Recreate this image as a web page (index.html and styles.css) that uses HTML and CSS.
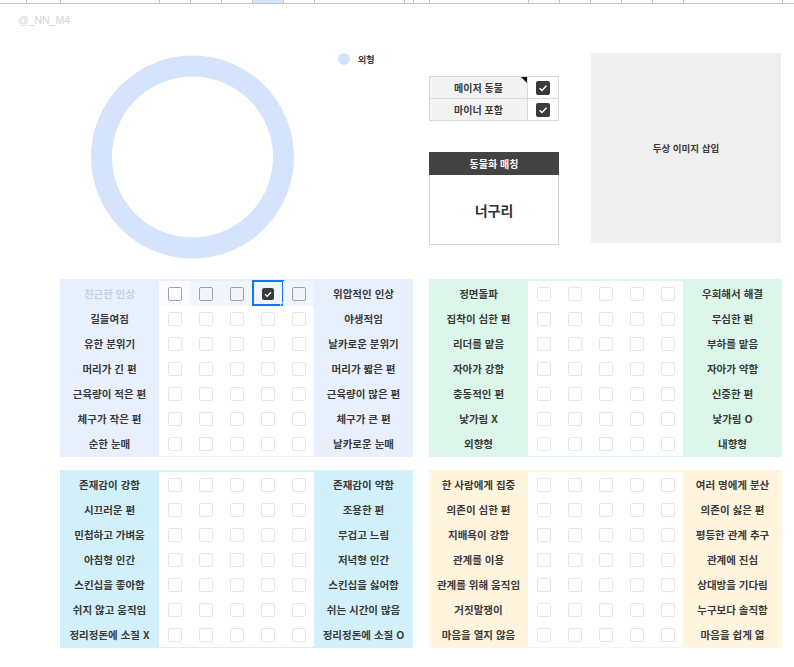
FILE: index.html
```html
<!DOCTYPE html>
<html lang="ko">
<head>
<meta charset="utf-8">
<title>동물화 매칭</title>
<link rel="stylesheet" href="styles.css">
</head>
<body>
<div class="strip">
  <span style="width:27px"></span><span style="width:34px"></span><span style="width:99px"></span><span style="width:31px"></span><span style="width:31px"></span><span style="width:31px"></span><span class="sel-col" style="width:31px"></span><span style="width:31px"></span><span style="width:90px"></span><span style="width:9px"></span><span style="width:16px"></span><span style="width:99px"></span><span style="width:31px"></span><span style="width:31px"></span><span style="width:31px"></span><span style="width:31px"></span><span style="width:31px"></span><span style="width:99px"></span>
</div>

<div class="top">
  <div class="watermark">@_NN_M4</div>
  <div class="top-row">
    <div class="chart">
      <svg width="369" height="222" viewBox="0 0 369 222">
        <circle cx="132.5" cy="104" r="91" fill="none" stroke="#d5e3fd" stroke-width="21"/>
        <circle cx="284" cy="6" r="6" fill="#d5e3fd"/>
        <text x="298" y="9.5" class="legend-text">외형</text>
      </svg>
    </div>
    <div class="side">
      <div class="mini">
        <div class="mini-row">
          <div class="mini-label note">메이저 동물</div>
          <div class="mini-box"><svg class="chk14" viewBox="0 0 14 14"><rect width="14" height="14" rx="2" fill="#3a3a3a"/><polyline points="3.6,7.2 6,9.5 10.5,4.7" fill="none" stroke="#fff" stroke-width="1.5"/></svg></div>
        </div>
        <div class="mini-row">
          <div class="mini-label">마이너 포함</div>
          <div class="mini-box"><svg class="chk14" viewBox="0 0 14 14"><rect width="14" height="14" rx="2" fill="#3a3a3a"/><polyline points="3.6,7.2 6,9.5 10.5,4.7" fill="none" stroke="#fff" stroke-width="1.5"/></svg></div>
        </div>
      </div>
      <div class="match">
        <div class="match-head">동물화 매칭</div>
        <div class="match-body">너구리</div>
      </div>
    </div>
    <div class="image-box">두상 이미지 삽입</div>
  </div>
</div>

<div class="tables">
  <div class="pair">
    <div class="panel blue">
      <div class="lab faded">친근한 인상</div><span class="cb r1 plain"></span><span class="cb r1"></span><span class="cb r1"></span><span class="cb r1 on"><svg class="chk12" viewBox="0 0 12 12"><rect width="12" height="12" rx="2" fill="#3a3a3a"/><polyline points="3,6.2 5.2,8.2 9,4.2" fill="none" stroke="#fff" stroke-width="1.4"/></svg><span class="selbox"></span><span class="handle"></span></span><span class="cb r1"></span><div class="lab">위압적인 인상</div>
      <div class="lab">길들여짐</div><span class="cb"></span><span class="cb"></span><span class="cb"></span><span class="cb"></span><span class="cb"></span><div class="lab">야생적임</div>
      <div class="lab">유한 분위기</div><span class="cb"></span><span class="cb"></span><span class="cb"></span><span class="cb"></span><span class="cb"></span><div class="lab">날카로운 분위기</div>
      <div class="lab">머리가 긴 편</div><span class="cb"></span><span class="cb"></span><span class="cb"></span><span class="cb"></span><span class="cb"></span><div class="lab">머리가 짧은 편</div>
      <div class="lab">근육량이 적은 편</div><span class="cb"></span><span class="cb"></span><span class="cb"></span><span class="cb"></span><span class="cb"></span><div class="lab">근육량이 많은 편</div>
      <div class="lab">체구가 작은 편</div><span class="cb"></span><span class="cb"></span><span class="cb"></span><span class="cb"></span><span class="cb"></span><div class="lab">체구가 큰 편</div>
      <div class="lab">순한 눈매</div><span class="cb"></span><span class="cb"></span><span class="cb"></span><span class="cb"></span><span class="cb"></span><div class="lab">날카로운 눈매</div>
    </div>
    <div class="panel mint">
      <div class="lab">정면돌파</div><span class="cb"></span><span class="cb"></span><span class="cb"></span><span class="cb"></span><span class="cb"></span><div class="lab">우회해서 해결</div>
      <div class="lab">집착이 심한 편</div><span class="cb"></span><span class="cb"></span><span class="cb"></span><span class="cb"></span><span class="cb"></span><div class="lab">무심한 편</div>
      <div class="lab">리더를 맡음</div><span class="cb"></span><span class="cb"></span><span class="cb"></span><span class="cb"></span><span class="cb"></span><div class="lab">부하를 맡음</div>
      <div class="lab">자아가 강함</div><span class="cb"></span><span class="cb"></span><span class="cb"></span><span class="cb"></span><span class="cb"></span><div class="lab">자아가 약함</div>
      <div class="lab">충동적인 편</div><span class="cb"></span><span class="cb"></span><span class="cb"></span><span class="cb"></span><span class="cb"></span><div class="lab">신중한 편</div>
      <div class="lab">낯가림 X</div><span class="cb"></span><span class="cb"></span><span class="cb"></span><span class="cb"></span><span class="cb"></span><div class="lab">낯가림 O</div>
      <div class="lab">외향형</div><span class="cb"></span><span class="cb"></span><span class="cb"></span><span class="cb"></span><span class="cb"></span><div class="lab">내향형</div>
    </div>
  </div>
  <div class="pair">
    <div class="panel cyan">
      <div class="lab">존재감이 강함</div><span class="cb"></span><span class="cb"></span><span class="cb"></span><span class="cb"></span><span class="cb"></span><div class="lab">존재감이 약함</div>
      <div class="lab">시끄러운 편</div><span class="cb"></span><span class="cb"></span><span class="cb"></span><span class="cb"></span><span class="cb"></span><div class="lab">조용한 편</div>
      <div class="lab">민첩하고 가벼움</div><span class="cb"></span><span class="cb"></span><span class="cb"></span><span class="cb"></span><span class="cb"></span><div class="lab">무겁고 느림</div>
      <div class="lab">아침형 인간</div><span class="cb"></span><span class="cb"></span><span class="cb"></span><span class="cb"></span><span class="cb"></span><div class="lab">저녁형 인간</div>
      <div class="lab">스킨십을 좋아함</div><span class="cb"></span><span class="cb"></span><span class="cb"></span><span class="cb"></span><span class="cb"></span><div class="lab">스킨십을 싫어함</div>
      <div class="lab">쉬지 않고 움직임</div><span class="cb"></span><span class="cb"></span><span class="cb"></span><span class="cb"></span><span class="cb"></span><div class="lab">쉬는 시간이 많음</div>
      <div class="lab">정리정돈에 소질 X</div><span class="cb"></span><span class="cb"></span><span class="cb"></span><span class="cb"></span><span class="cb"></span><div class="lab">정리정돈에 소질 O</div>
    </div>
    <div class="panel cream">
      <div class="lab">한 사람에게 집중</div><span class="cb"></span><span class="cb"></span><span class="cb"></span><span class="cb"></span><span class="cb"></span><div class="lab">여러 명에게 분산</div>
      <div class="lab">의존이 심한 편</div><span class="cb"></span><span class="cb"></span><span class="cb"></span><span class="cb"></span><span class="cb"></span><div class="lab">의존이 싫은 편</div>
      <div class="lab">지배욕이 강함</div><span class="cb"></span><span class="cb"></span><span class="cb"></span><span class="cb"></span><span class="cb"></span><div class="lab">평등한 관계 추구</div>
      <div class="lab">관계를 이용</div><span class="cb"></span><span class="cb"></span><span class="cb"></span><span class="cb"></span><span class="cb"></span><div class="lab">관계에 진심</div>
      <div class="lab">관계를 위해 움직임</div><span class="cb"></span><span class="cb"></span><span class="cb"></span><span class="cb"></span><span class="cb"></span><div class="lab">상대방을 기다림</div>
      <div class="lab">거짓말쟁이</div><span class="cb"></span><span class="cb"></span><span class="cb"></span><span class="cb"></span><span class="cb"></span><div class="lab">누구보다 솔직함</div>
      <div class="lab">마음을 열지 않음</div><span class="cb"></span><span class="cb"></span><span class="cb"></span><span class="cb"></span><span class="cb"></span><div class="lab">마음을 쉽게 엶</div>
    </div>
  </div>
</div>
</body>
</html>
```

FILE: styles.css
```css
* { box-sizing: border-box; }
html, body { margin: 0; padding: 0; background: #fff; }
body {
  width: 794px;
  height: 667px;
  overflow: hidden;
  font-family: "Noto Sans CJK KR", "Noto Sans", sans-serif;
  color: #3a3a3a;
}

/* sheet column header remnant */
.strip {
  display: flex;
  height: 4px;
  border-bottom: 1px solid #c4c4c4;
}
.strip span {
  display: block;
  height: 3px;
  border-right: 1px solid #c4c4c4;
  flex: none;
}
.strip .sel-col { background: #d3e3fd; }

.top { height: 275px; }
.watermark {
  height: 25px;
  padding: 8px 0 0 18px;
  font: 10.5px/16px "Liberation Sans", Arial, sans-serif;
  color: #d2d2d2;
}
.top-row {
  display: flex;
  align-items: flex-start;
  margin-top: 24px;
  padding-left: 60px;
}
.chart { width: 369px; height: 222px; flex: none; }
.chart svg { display: block; }
.legend-text {
  font-family: "Noto Sans CJK KR", sans-serif;
  font-size: 9px;
  font-weight: 700;
  fill: #3a3a3a;
}

.side { width: 130px; flex: none; margin-top: 23px; }
.mini { border: 1px solid #d9d9d9; }
.mini-row { display: flex; height: 22px; }
.mini-row + .mini-row { border-top: 1px solid #d9d9d9; height: 22px; }
.mini-row:first-child { height: 21px; }
.mini-label {
  width: 98px;
  background: #f3f3f3;
  border-right: 1px solid #d9d9d9;
  display: flex;
  align-items: center;
  justify-content: center;
  font-size: 10px;
  font-weight: 700;
  color: #3a3a3a;
  position: relative;
}
.mini-label.note::after {
  content: "";
  position: absolute;
  top: 0;
  right: 0;
  border-top: 6px solid #111;
  border-left: 6px solid transparent;
}
.mini-box {
  flex: 1;
  background: #fff;
  display: flex;
  align-items: center;
  justify-content: center;
}
.chk14 { width: 14px; height: 14px; display: block; }

.match { margin-top: 31px; }
.match-head {
  height: 23px;
  background: #434343;
  color: #fff;
  font-size: 10px;
  font-weight: 700;
  display: flex;
  align-items: center;
  justify-content: center;
}
.match-body {
  height: 70px;
  border: 1px solid #d4d4d4;
  border-top: none;
  display: flex;
  align-items: center;
  justify-content: center;
  font-size: 14px;
  font-weight: 700;
  color: #333;
}

.image-box {
  width: 190px;
  height: 190px;
  margin-left: 32px;
  flex: none;
  background: #efefef;
  display: flex;
  align-items: center;
  justify-content: center;
  font-size: 9.5px;
  font-weight: 700;
  color: #3a3a3a;
}

/* check tables */
.tables { display: flex; flex-direction: column; gap: 13px; }
.pair { display: flex; gap: 16px; padding-left: 60px; }
.panel {
  width: 353px;
  display: grid;
  grid-template-columns: 99px repeat(5, 31px) 99px;
  grid-auto-rows: 25px;
  padding: 2px 0 1px;
}
.blue { background: #e8f0fe; }
.mint { background: #dcf7ea; }
.cyan { background: #d2f0f9; }
.cream { background: #fff4de; }

.lab {
  display: flex;
  align-items: center;
  justify-content: center;
  white-space: nowrap;
  font-size: 10.5px;
  font-weight: 700;
  color: #3a3a3a;
}
.lab.faded { color: #c4d0e6; }

.cb {
  background: #fff;
  display: flex;
  align-items: center;
  justify-content: center;
  position: relative;
}
.cb::before {
  content: "";
  width: 12px;
  height: 12px;
  border: 1px solid #e6e6e6;
  border-radius: 2px;
}
.cb.r1 { background: #f1f5fe; }
.cb.r1.plain { background: #f9fbff; }
.cb.r1::before { border: 1.5px solid #a2a2a2; }
.cb.on::before { display: none; }
.chk12 { width: 12px; height: 12px; display: block; }
.selbox {
  position: absolute;
  top: -1px;
  left: 0;
  right: -1px;
  bottom: 0;
  border: 2px solid #1a73e8;
}
.handle {
  position: absolute;
  right: -4px;
  bottom: -3px;
  width: 7px;
  height: 7px;
  border-radius: 50%;
  background: #1a73e8;
  border: 1px solid #fff;
}
```
